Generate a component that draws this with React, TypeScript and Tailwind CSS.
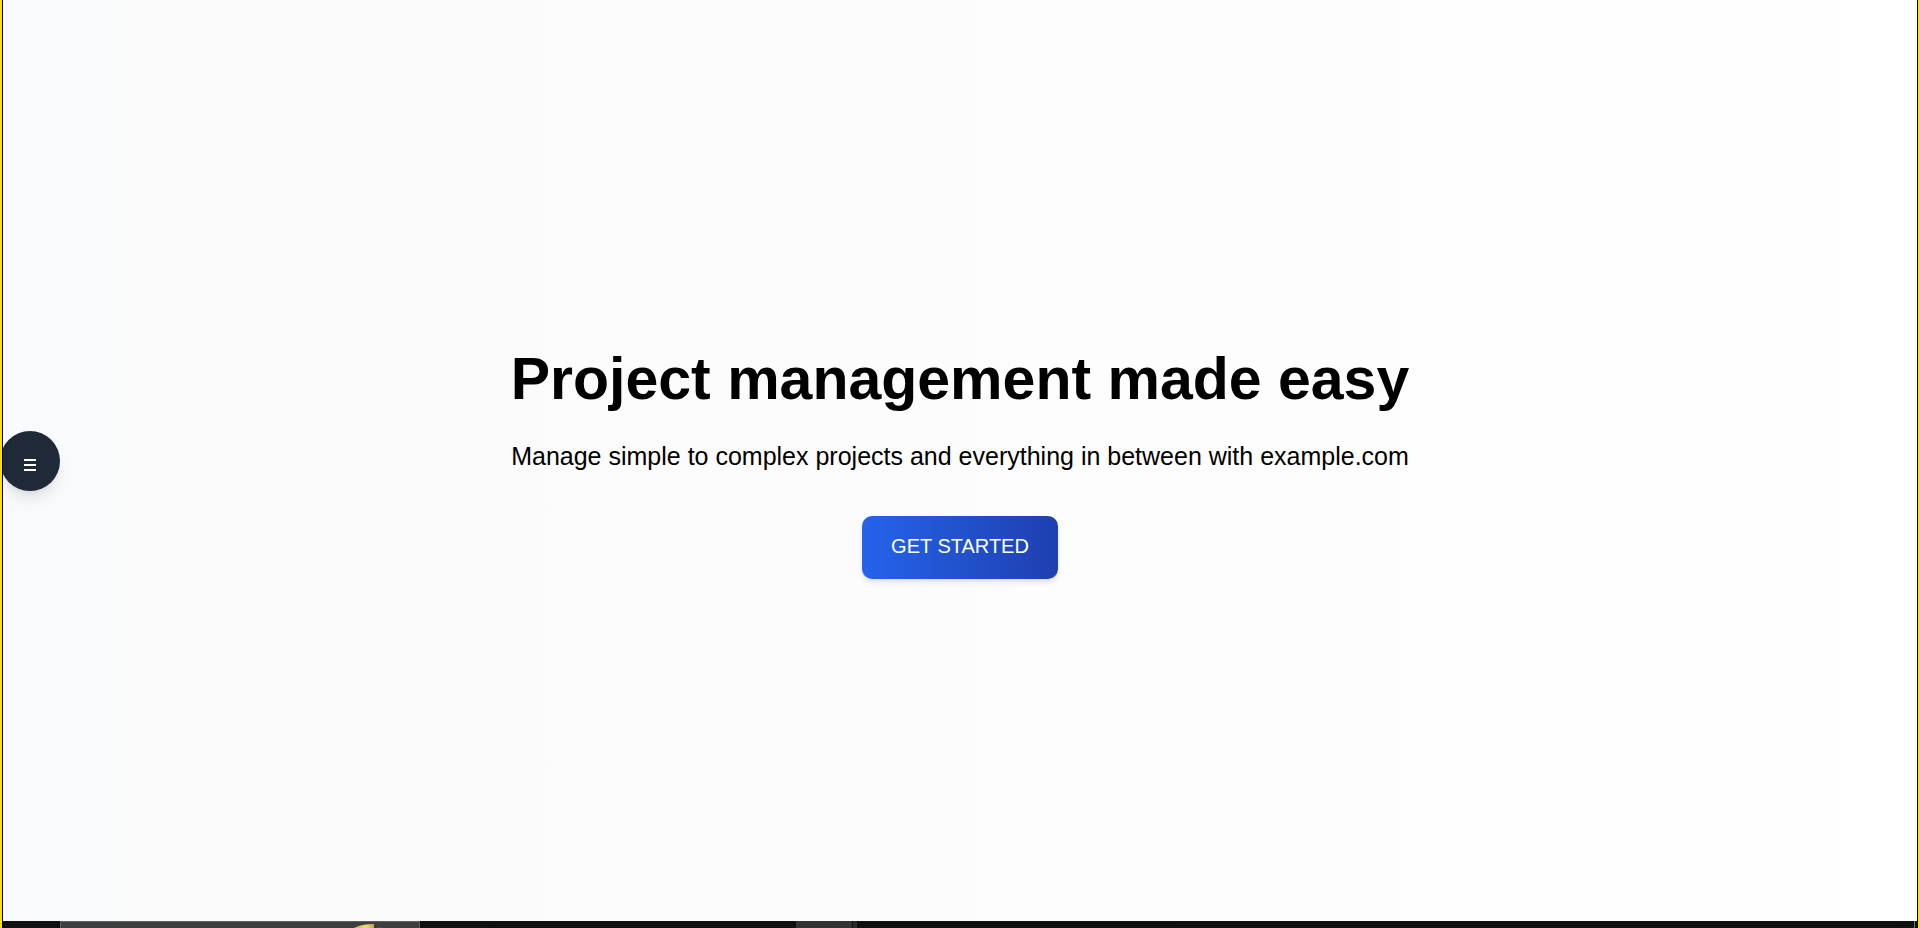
export default function App() {
  return (
    <div className="flex h-screen overflow-hidden border-x-2 border-[#ffe000] font-['Liberation_Sans',Arial,sans-serif] text-black">
      <div className="flex min-w-0 flex-1 flex-col border-x border-black">
        <main className="relative flex flex-1 flex-col items-center justify-center overflow-hidden bg-linear-to-r from-[#f8fafc] via-[#fafafa] via-10% to-white pt-[6px]">
          <button
            type="button"
            aria-label="Open menu"
            className="absolute top-1/2 -left-[3px] flex size-[60px] -translate-y-[30px] items-center justify-center rounded-full bg-[#1f2937] text-white shadow-lg"
          >
            <svg viewBox="0 0 14 14" className="mt-2 size-[14px]" stroke="currentColor" strokeWidth="2" aria-hidden="true">
              <path d="M1 2h12M1 7h12M1 12h12" />
            </svg>
          </button>
          <h1 className="text-[59px] leading-[60px] font-bold">Project management made easy</h1>
          <p className="mt-[29px] text-[25px] leading-9">
            Manage simple to complex projects and everything in between with example.com
          </p>
          <button
            type="button"
            className="mt-[42px] rounded-[10px] bg-linear-to-r from-[#2563eb] to-[#1e40af] px-[29px] pt-[15px] pb-[17px] text-xl leading-[31px] text-white shadow-md"
          >
            GET STARTED
          </button>
        </main>
        <footer className="flex h-[7px] overflow-hidden bg-[#101010]">
          <div className="w-[57px]" />
          <div className="flex w-[360px] justify-end border border-b-0 border-[#5e5e5e] bg-[#3e3e3e] pt-[2px] pr-[37px]">
            <svg viewBox="0 0 28 4" className="h-1 w-7 shrink-0" aria-hidden="true">
              <defs>
                <linearGradient id="gold">
                  <stop offset="0" stopColor="#d6a94b" />
                  <stop offset="0.6" stopColor="#f3d774" />
                  <stop offset="1" stopColor="#c99f4b" />
                </linearGradient>
              </defs>
              <path d="M0 4Q7 0 20 0v4Z" fill="url(#gold)" />
              <path d="M23 4l2-1 3 1Z" fill="#6b5735" />
            </svg>
          </div>
          <div className="ml-[376px] w-14 bg-[#333333]" />
          <div className="w-px bg-[#101010]" />
          <div className="w-1 bg-[#2b2b2b]" />
          <div className="mr-[2px] ml-auto w-px bg-[#777777]" />
        </footer>
      </div>
    </div>
  );
}
